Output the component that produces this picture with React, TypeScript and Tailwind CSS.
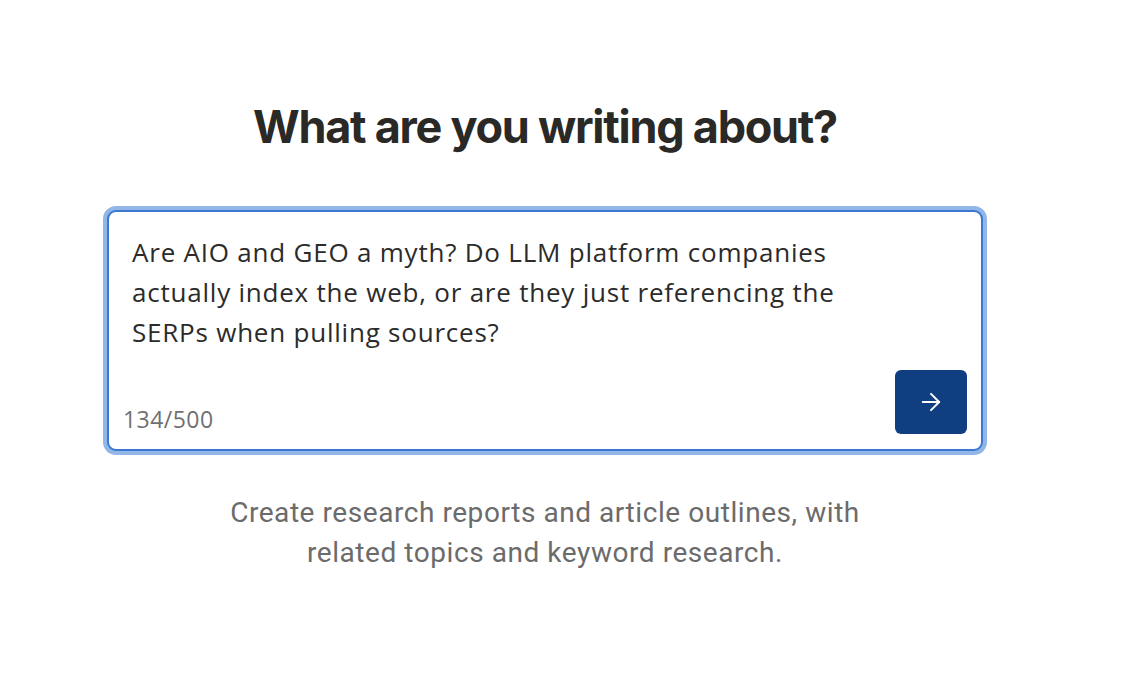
import { ArrowRight } from "lucide-react";

export default function App() {
  const prompt =
    "Are AIO and GEO a myth? Do LLM platform companies actually index the web, or are they just referencing the SERPs when pulling sources?";

  return (
    <div className="min-h-[676px] w-full bg-white pr-[54px] font-['Inter',sans-serif]">
      <div className="mx-auto flex w-[886px] flex-col items-center pt-[100px]">
        <h1 className="text-[45px] font-bold leading-[1.2] tracking-[-0.028em] text-[#2a2925]">
          What are you writing about?
        </h1>

        <div className="mt-[56px] w-[876px] rounded-[9px] border-2 border-[#3b78d0] bg-white shadow-[0_0_0_4px_#92b6e8]">
          <div className="px-[23px] pt-[20px]">
            <p className="max-w-[720px] font-['Open_Sans',sans-serif] text-[26px] leading-[40px] tracking-[0.03em] text-[#2b2b2b]">
              {prompt}
            </p>
          </div>
          <div className="mt-[18px] flex items-end justify-between pb-[15px] pl-[14px] pr-[14px]">
            <span className="font-['Open_Sans',sans-serif] text-[23px] leading-[30px] tracking-[0.02em] text-[#707070]">
              {prompt.length}/500
            </span>
            <button className="flex h-[64px] w-[72px] items-center justify-center rounded-[6px] bg-[#0f3f80] text-white">
              <ArrowRight className="h-[28px] w-[28px]" strokeWidth={1.7} />
            </button>
          </div>
        </div>

        <p className="mt-[42px] w-[680px] text-center font-['Roboto',sans-serif] text-[28px] leading-[40px] tracking-[0.02em] text-[#6b6b6b]">
          Create research reports and article outlines, with related topics and keyword research.
        </p>
      </div>
    </div>
  );
}
